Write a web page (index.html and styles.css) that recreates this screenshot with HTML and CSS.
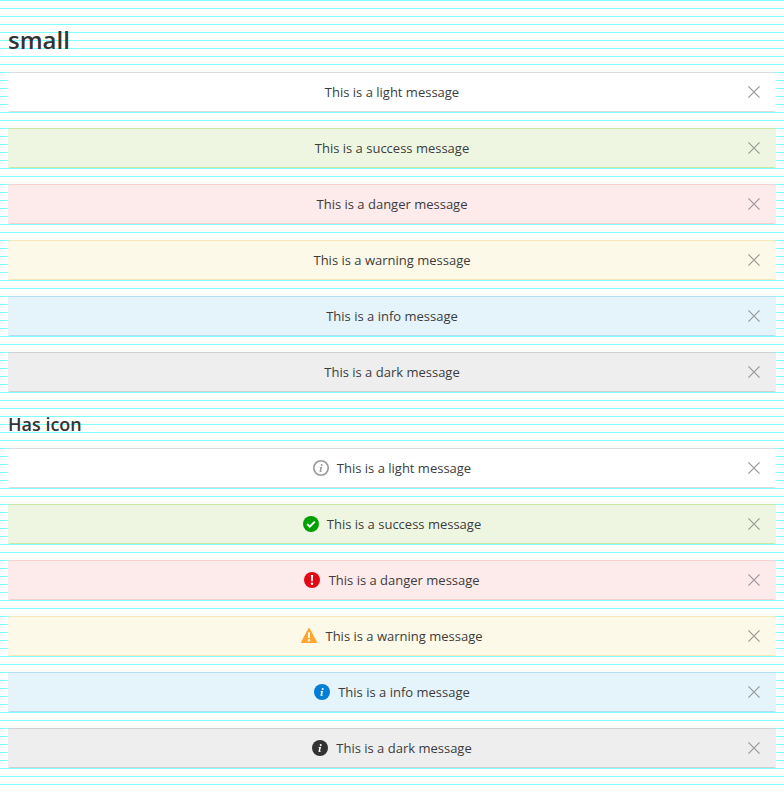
FILE: index.html
```html
<!DOCTYPE html>
<html lang="en">
<head>
<meta charset="utf-8">
<title>Messages</title>
<link rel="stylesheet" href="styles.css">
</head>
<body>
<svg class="sprite" aria-hidden="true">
  <symbol id="close" viewBox="0 0 12 12"><path d="M.4.4l11.2 11.2M11.6.4L.4 11.6" fill="none" stroke="currentColor" stroke-width="1.2"/></symbol>
  <symbol id="letter-i" viewBox="0 0 16 16"><circle cx="8.7" cy="4.9" r="1"/><path d="M6.2 7.2l2.9-.5-1 4.1c-.1.4.2.4.9-.1l.2.4c-1.5 1.3-3 1.2-2.6-.4l.7-2.9-1.2-.2z"/></symbol>
  <symbol id="info-outline" viewBox="0 0 16 16"><circle cx="8" cy="8" r="7.2" fill="none" stroke="currentColor" stroke-width="1.6"/><use href="#letter-i" fill="currentColor"/></symbol>
  <symbol id="info" viewBox="0 0 16 16"><circle cx="8" cy="8" r="8" fill="currentColor"/><use href="#letter-i" fill="#fff"/></symbol>
  <symbol id="check" viewBox="0 0 16 16"><circle cx="8" cy="8" r="8" fill="currentColor"/><path d="M4.2 8.1l2.6 2.5 5-5" fill="none" stroke="#fff" stroke-width="2"/></symbol>
  <symbol id="alert" viewBox="0 0 16 16"><circle cx="8" cy="8" r="8" fill="currentColor"/><path d="M6.9 3h2.2l-.3 6.2H7.2z" fill="#fff"/><circle cx="8" cy="11.7" r="1.2" fill="#fff"/></symbol>
  <symbol id="warning" viewBox="0 0 16 16"><path d="M8 1L15 14.2H1z" fill="currentColor" stroke="currentColor" stroke-width="1.8" stroke-linejoin="round"/><path d="M6.9 4.5h2.2L8.8 10H7.2z" fill="#fff"/><circle cx="8" cy="12.2" r="1.2" fill="#fff"/></symbol>
</svg>

<h1 class="title">small</h1>
<div class="message light"><span>This is a light message</span><svg class="close"><use href="#close"/></svg></div>
<div class="message success"><span>This is a success message</span><svg class="close"><use href="#close"/></svg></div>
<div class="message danger"><span>This is a danger message</span><svg class="close"><use href="#close"/></svg></div>
<div class="message warning"><span>This is a warning message</span><svg class="close"><use href="#close"/></svg></div>
<div class="message info"><span>This is a info message</span><svg class="close"><use href="#close"/></svg></div>
<div class="message dark"><span>This is a dark message</span><svg class="close"><use href="#close"/></svg></div>

<h2 class="subtitle">Has icon</h2>
<div class="message light"><svg class="icon"><use href="#info-outline"/></svg><span>This is a light message</span><svg class="close"><use href="#close"/></svg></div>
<div class="message success"><svg class="icon"><use href="#check"/></svg><span>This is a success message</span><svg class="close"><use href="#close"/></svg></div>
<div class="message danger"><svg class="icon"><use href="#alert"/></svg><span>This is a danger message</span><svg class="close"><use href="#close"/></svg></div>
<div class="message warning"><svg class="icon"><use href="#warning"/></svg><span>This is a warning message</span><svg class="close"><use href="#close"/></svg></div>
<div class="message info"><svg class="icon"><use href="#info"/></svg><span>This is a info message</span><svg class="close"><use href="#close"/></svg></div>
<div class="message dark"><svg class="icon"><use href="#info"/></svg><span>This is a dark message</span><svg class="close"><use href="#close"/></svg></div>
</body>
</html>
```
FILE: styles.css
```css
* { box-sizing: border-box; }
html {
  min-height: 100%;
  background: #fff linear-gradient(#7fffff 1px, transparent 1px) 0 0 / 100% 8px;
}
body {
  margin: 0;
  padding: 24px 8px 0;
  color: #333;
  font: 13px/24px "Open Sans", sans-serif;
}
.sprite { position: absolute; width: 0; height: 0; }
.title { margin: 0 0 16px; font-size: 24px; line-height: 32px; font-weight: 600; }
.subtitle { margin: 0 0 12px; padding-top: 4px; font-size: 18px; line-height: 24px; font-weight: 600; }
.message {
  display: flex;
  align-items: center;
  justify-content: center;
  gap: 8px;
  height: 40px;
  margin-bottom: 16px;
  padding: 0 16px 0 36px;
  border: solid;
  border-width: 1px 0;
  border-radius: 2px;
  color: #3c3c3c;
}
.message span { margin-left: auto; }
.icon { width: 16px; height: 16px; margin-left: auto; flex: none; }
.icon + span { margin-left: 0; }
.danger .icon { margin-right: .3px; }
.close { width: 12px; height: 12px; margin-left: auto; color: #999; flex: none; }
.light { background: #fff; border-color: #dbdbdb; }
.success { background: #eef6e2; border-color: #cae8a2; }
.danger { background: #fdeaea; border-color: #f9cfd0; }
.warning { background: #fcf9e8; border-color: #f6e7b5; }
.info { background: #e5f3fb; border-color: #b5def2; }
.dark { background: #eee; border-color: #d0d0d0; }
.light .icon { color: #999; }
.success .icon { color: #00a000; }
.danger .icon { color: #e10a14; }
.warning .icon { color: #ffa530; }
.info .icon { color: #007dd6; }
.dark .icon { color: #333; }
```
